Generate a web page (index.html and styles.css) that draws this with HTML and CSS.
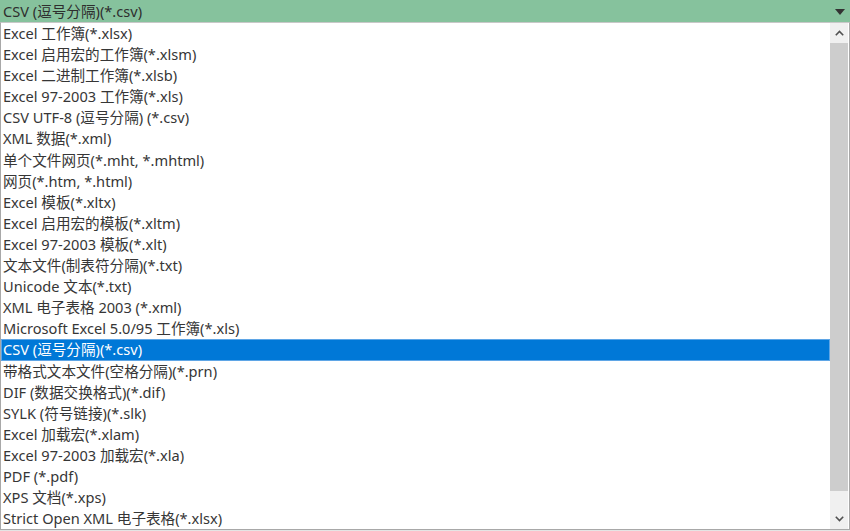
FILE: index.html
```html
<!DOCTYPE html>
<html lang="zh-CN">
<head>
    <meta charset="UTF-8">
    <title>保存类型</title>
    <link rel="stylesheet" href="styles.css">
</head>
<body>
    <div class="combo">
        <div class="combo-value">CSV (逗号分隔)(*.csv)</div>
        <svg class="combo-arrow" width="10" height="6" viewBox="0 0 10 6"><polygon points="0,0 10,0 5,6" fill="#333"/></svg>
    </div>

    <div class="dropdown">
        <ul class="options">
            <li>Excel 工作簿(*.xlsx)</li>
            <li>Excel 启用宏的工作簿(*.xlsm)</li>
            <li>Excel 二进制工作簿(*.xlsb)</li>
            <li>Excel 97-2003 工作簿(*.xls)</li>
            <li>CSV UTF-8 (逗号分隔) (*.csv)</li>
            <li>XML 数据(*.xml)</li>
            <li>单个文件网页(*.mht, *.mhtml)</li>
            <li>网页(*.htm, *.html)</li>
            <li>Excel 模板(*.xltx)</li>
            <li>Excel 启用宏的模板(*.xltm)</li>
            <li>Excel 97-2003 模板(*.xlt)</li>
            <li>文本文件(制表符分隔)(*.txt)</li>
            <li>Unicode 文本(*.txt)</li>
            <li>XML 电子表格 2003 (*.xml)</li>
            <li>Microsoft Excel 5.0/95 工作簿(*.xls)</li>
            <li class="selected">CSV (逗号分隔)(*.csv)</li>
            <li>带格式文本文件(空格分隔)(*.prn)</li>
            <li>DIF (数据交换格式)(*.dif)</li>
            <li>SYLK (符号链接)(*.slk)</li>
            <li>Excel 加载宏(*.xlam)</li>
            <li>Excel 97-2003 加载宏(*.xla)</li>
            <li>PDF (*.pdf)</li>
            <li>XPS 文档(*.xps)</li>
            <li>Strict Open XML 电子表格(*.xlsx)</li>
        </ul>
        <div class="scrollbar">
            <div class="scroll-btn">
                <svg width="9" height="6" viewBox="0 0 9 6"><polyline points="0.8,5.2 4.5,1.5 8.2,5.2" fill="none" stroke="#505050" stroke-width="1.6"/></svg>
            </div>
            <div class="scroll-thumb"></div>
            <div class="scroll-track"></div>
            <div class="scroll-btn">
                <svg width="9" height="6" viewBox="0 0 9 6"><polyline points="0.8,0.8 4.5,4.5 8.2,0.8" fill="none" stroke="#505050" stroke-width="1.6"/></svg>
            </div>
        </div>
    </div>
    <div class="under"></div>
</body>
</html>
```

FILE: styles.css
```css
body {
    margin: 0;
    width: 850px;
    height: 531px;
    overflow: hidden;
    background-color: #ffffff;
    font-family: "Noto Sans", "Noto Sans CJK SC", sans-serif;
    font-size: 14.6px;
    color: #363636;
}
.combo {
    height: 22px;
    background-color: #86c29d;
    display: flex;
    align-items: center;
    justify-content: space-between;
    padding: 0 5px 0 3px;
}
.combo-value {
    line-height: 22px;
    color: #2e2e2e;
}
.combo-arrow {
    margin-top: 1px;
}
.dropdown {
    display: flex;
    height: 506px;
    border: 1px solid #a8a8a8;
    border-top-color: #c8c8c8;
    background-color: #ffffff;
}
.options {
    list-style: none;
    margin: 0;
    padding: 0;
    flex: 1;
}
.options li {
    height: 21.1px;
    line-height: 21.1px;
    padding-left: 2px;
    white-space: nowrap;
}
.options li.selected {
    background-color: #0078d7;
    color: #ffffff;
    box-shadow: inset 0 0 0 1px #5fa6e6;
}
.scrollbar {
    width: 18px;
    display: flex;
    flex-direction: column;
    background-color: #f0f0f0;
    margin-right: 1px;
}
.scroll-btn {
    height: 20px;
    display: flex;
    align-items: center;
    justify-content: center;
}
.scroll-thumb {
    height: 448px;
    background-color: #cdcdcd;
}
.scroll-track {
    flex: 1;
}
.under {
    height: 2px;
    background-color: #e4e4e4;
}
```
